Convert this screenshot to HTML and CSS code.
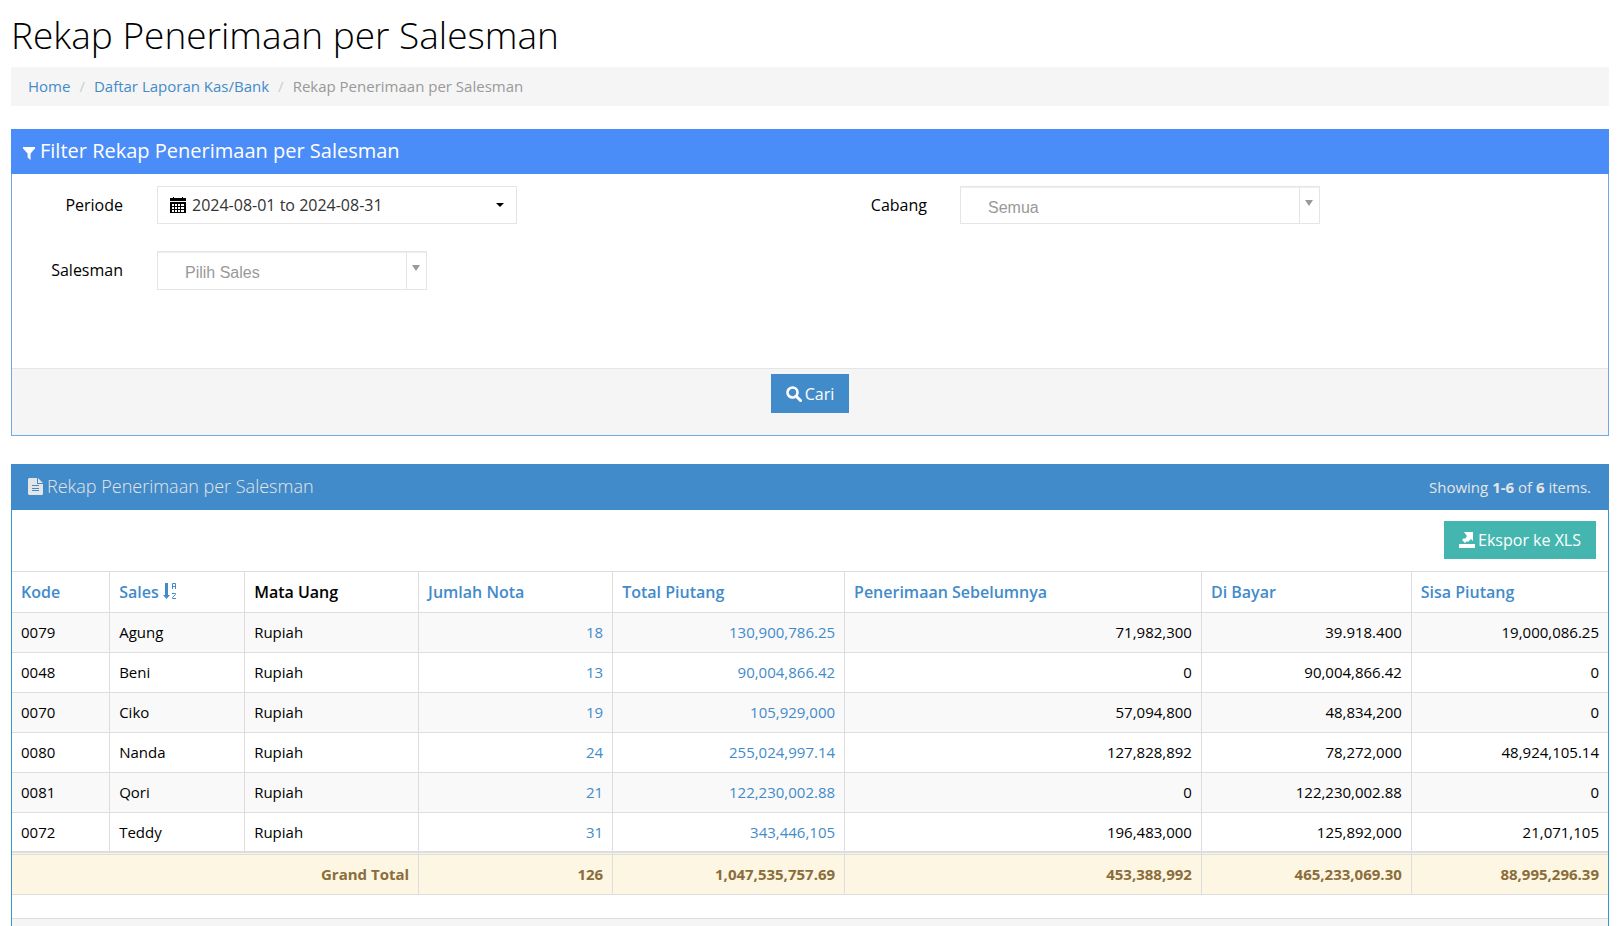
FILE: index.html
```html
<!DOCTYPE html>
<html lang="id">
<head>
<meta charset="utf-8">
<title>Rekap Penerimaan per Salesman</title>
<link rel="stylesheet" href="styles.css">
</head>
<body>
<main class="page">
  <h1 class="page-title">Rekap Penerimaan per Salesman</h1>
  <nav class="breadcrumb" aria-label="Breadcrumb">
    <a href="#">Home</a><span class="sep">/</span><a href="#">Daftar Laporan Kas/Bank</a><span class="sep">/</span><span>Rekap Penerimaan per Salesman</span>
  </nav>

  <form class="panel panel-filter">
    <h2 class="filter-heading"><svg class="icon icon-funnel" viewBox="0 0 12 13"><path d="M0 0h12v1.400L7.600 6.500V13L4.600 10.500v-4L0 1.400z"/></svg>Filter Rekap Penerimaan per Salesman</h2>
    <div class="fields">
      <div class="field">
        <label for="periode">Periode</label>
        <button type="button" class="date-range" id="periode"><svg class="icon icon-calendar" viewBox="0 0 16 16"><path fill-rule="evenodd" d="M0 1h3V0h1v1h8V0h1v1h3v3H0zM0 5h16v11H0zM2 7v2h2V7zm3 0v2h2V7zm3 0v2h2V7zm3 0v2h3V7zM2 10v2h2v-2zm3 0v2h2v-2zm3 0v2h2v-2zm3 0v2h3v-2zM2 13v2h2v-2zm3 0v2h2v-2zm3 0v2h2v-2zm3 0v2h3v-2z"/></svg><span>2024-08-01 to 2024-08-31</span><span class="caret"></span></button>
      </div>
      <div class="field">
        <label for="cabang">Cabang</label>
        <div class="select-box"><select id="cabang"><option>Semua</option></select></div>
      </div>
      <div class="field">
        <label for="salesman">Salesman</label>
        <div class="select-box select-short"><select id="salesman"><option>Pilih Sales</option></select></div>
      </div>
    </div>
    <div class="filter-footer">
      <button type="submit" class="btn btn-primary"><svg class="icon icon-search" viewBox="0 0 16 16"><circle cx="6.500" cy="6.500" r="5" fill="none" stroke="currentColor" stroke-width="2.600"/><path d="M10 10l4.500 4.500" stroke="currentColor" stroke-width="3" stroke-linecap="round"/></svg>Cari</button>
    </div>
  </form>

  <section class="panel panel-result">
    <header class="result-heading">
      <h2><svg class="icon icon-file" viewBox="0 0 15 17"><path fill-rule="evenodd" d="M1 0h8v6h6v10l-1 1H1l-1-1V1zM10 0l5 5h-5zM4 7v1h7V7zm0 3v1h7v-1zm0 2v1h7v-1z"/></svg>Rekap Penerimaan per Salesman</h2>
      <div class="summary">Showing <b>1-6</b> of <b>6</b> items.</div>
    </header>
    <div class="toolbar">
      <button type="button" class="btn btn-export"><svg class="icon icon-export" viewBox="0 0 16 16"><path d="M5 0h9v9l-2-2-3 3-1-1-2 2-3-3 2-2 1 1 2-3zM0 12h16v4H0z"/></svg>Ekspor ke XLS</button>
    </div>
    <table class="grid">
      <colgroup><col class="c1"><col class="c2"><col class="c3"><col class="c4"><col class="c5"><col class="c6"><col class="c7"><col class="c8"></colgroup>
      <thead>
        <tr><th><a href="#">Kode</a></th><th><a href="#">Sales <svg class="icon icon-sort" viewBox="0 0 14 17"><path d="M2 0h3v12h2l-3.500 4L0 12h2z"/><path fill="none" stroke="currentColor" d="M9.500 6V.500h3V6M9.500 3.500h3M9 10.500h3.500v1l-3 3v1H13"/></svg></a></th><th>Mata Uang</th><th><a href="#">Jumlah Nota</a></th><th><a href="#">Total Piutang</a></th><th><a href="#">Penerimaan Sebelumnya</a></th><th><a href="#">Di Bayar</a></th><th><a href="#">Sisa Piutang</a></th></tr>
      </thead>
      <tbody>
        <tr><td>0079</td><td>Agung</td><td>Rupiah</td><td class="num"><a href="#">18</a></td><td class="num"><a href="#">130,900,786.25</a></td><td class="num">71,982,300</td><td class="num">39.918.400</td><td class="num">19,000,086.25</td></tr>
        <tr><td>0048</td><td>Beni</td><td>Rupiah</td><td class="num"><a href="#">13</a></td><td class="num"><a href="#">90,004,866.42</a></td><td class="num">0</td><td class="num">90,004,866.42</td><td class="num">0</td></tr>
        <tr><td>0070</td><td>Ciko</td><td>Rupiah</td><td class="num"><a href="#">19</a></td><td class="num"><a href="#">105,929,000</a></td><td class="num">57,094,800</td><td class="num">48,834,200</td><td class="num">0</td></tr>
        <tr><td>0080</td><td>Nanda</td><td>Rupiah</td><td class="num"><a href="#">24</a></td><td class="num"><a href="#">255,024,997.14</a></td><td class="num">127,828,892</td><td class="num">78,272,000</td><td class="num">48,924,105.14</td></tr>
        <tr><td>0081</td><td>Qori</td><td>Rupiah</td><td class="num"><a href="#">21</a></td><td class="num"><a href="#">122,230,002.88</a></td><td class="num">0</td><td class="num">122,230,002.88</td><td class="num">0</td></tr>
        <tr><td>0072</td><td>Teddy</td><td>Rupiah</td><td class="num"><a href="#">31</a></td><td class="num"><a href="#">343,446,105</a></td><td class="num">196,483,000</td><td class="num">125,892,000</td><td class="num">21,071,105</td></tr>
      </tbody>
      <tfoot>
        <tr><td class="num" colspan="3">Grand Total</td><td class="num">126</td><td class="num">1,047,535,757.69</td><td class="num">453,388,992</td><td class="num">465,233,069.30</td><td class="num">88,995,296.39</td></tr>
      </tfoot>
    </table>
    <div class="result-footer"></div>
  </section>
</main>
</body>
</html>
```

FILE: styles.css
```css
* {
  box-sizing: border-box;
}

body {
  margin: 0;
  background: #fff;
  color: #000;
  font: 400 15px/22px "Open Sans", sans-serif;
}

a {
  color: #428bca;
  text-decoration: none;
}

button,
select {
  font: inherit;
}

.icon {
  fill: currentColor;
  flex: none;
}

.page {
  padding: 7px 12px 0 11px;
}

.page-title {
  margin: 0;
  font-size: 37px;
  font-weight: 300;
  line-height: 55px;
}

.breadcrumb {
  display: flex;
  margin: 5px 0 23px;
  padding: 8px 17px;
  height: 39px;
  background: #f5f5f5;
  color: #999;
}

.sep {
  padding: 0 9px;
  color: #ccc;
}

.panel {
  border: 1px solid #6faae6;
}

.filter-heading {
  display: flex;
  align-items: center;
  gap: 5px;
  margin: -1px -1px 0;
  padding: 0 12px 2px;
  height: 45px;
  background: #4b8df8;
  color: #fff;
  font-size: 20px;
  font-weight: 400;
}

.icon-funnel {
  width: 12px;
  height: 13px;
  margin-top: 6px;
}

.fields {
  display: grid;
  grid-template-columns: 1fr 1fr;
  row-gap: 27px;
  padding: 12px 0 78px;
}

.field {
  display: flex;
  font-size: 16px;
}

.field label {
  width: 111px;
  padding-top: 8px;
  text-align: right;
}

.field:nth-child(even) label {
  width: 117px;
}

.field .date-range,
.select-box {
  width: 360px;
  height: 38px;
  margin-left: 34px;
  border: 1px solid #e5e5e5;
  background: #fff;
}

.field:nth-child(even) .select-box {
  margin-left: 33px;
}

.date-range {
  display: flex;
  align-items: center;
  gap: 6px;
  padding: 0 12px;
  color: #333;
}

.icon-calendar {
  width: 16px;
  height: 16px;
  color: #000;
}

.caret {
  margin-left: auto;
  border: 4px solid transparent;
  border-top-color: #000;
  border-bottom: 0;
}

.select-box {
  position: relative;
  box-shadow: inset 0 1px 1px #eee;
}

.field .select-short {
  width: 270px;
  height: 39px;
}

.select-box select {
  width: 100%;
  height: 100%;
  padding: 5px 27px 0;
  border: 0;
  background: transparent;
  color: #999;
  font-family: "Liberation Sans", Arial, sans-serif;
  appearance: none;
}

.select-box::before {
  position: absolute;
  top: 0;
  right: 19px;
  bottom: 0;
  border-left: 1px solid #e5e5e5;
  content: "";
}

.select-box::after {
  position: absolute;
  top: 13px;
  right: 6px;
  border: 4px solid transparent;
  border-top: 6px solid #999;
  border-bottom: 0;
  content: "";
}

.filter-footer {
  display: flex;
  justify-content: center;
  height: 67px;
  padding-top: 5px;
  border-top: 1px solid #e5e5e5;
  background: #f5f5f5;
}

.btn {
  display: flex;
  align-items: center;
  gap: 3px;
  height: 38px;
  padding: 0 15px;
  border: 0;
  color: #fff;
  font-size: 16px;
}

.btn-primary {
  height: 39px;
  background: #428bca;
}

.icon-search,
.icon-export {
  width: 16px;
  height: 16px;
}

.panel-result {
  margin-top: 28px;
  border-color: #3598c8;
}

.result-heading {
  display: flex;
  align-items: center;
  justify-content: space-between;
  height: 46px;
  margin: -1px -1px 0;
  padding: 0 18px 0 17px;
  background: #428bca;
  color: #e5e5e5;
}

.result-heading h2 {
  display: flex;
  align-items: center;
  gap: 4px;
  margin: 0;
  padding-bottom: 2px;
  font-size: 18px;
  font-weight: 300;
}

.icon-file {
  width: 15px;
  height: 17px;
}

.toolbar {
  display: flex;
  justify-content: flex-end;
  padding: 11px 12px 12px;
}

.btn-export {
  background: #45b6af;
}

.grid {
  width: 100%;
  border-collapse: separate;
  border-spacing: 0;
  border-top: 1px solid #ddd;
  table-layout: fixed;
}

.c1 { width: 6.150%; }
.c2 { width: 8.460%; }
.c3 { width: 10.900%; }
.c4 { width: 12.160%; }
.c5 { width: 14.530%; }
.c6 { width: 22.360%; }
.c7 { width: 13.150%; }
.c8 { width: 12.290%; }

.grid th,
.grid td {
  height: 40px;
  padding: 8px 9px;
  border-right: 1px solid #ddd;
  border-bottom: 1px solid #ddd;
  text-align: left;
}

.grid td {
  padding: 8px 9px 9px;
}

.grid th {
  height: 41px;
  font-size: 16px;
  font-weight: 600;
}

.grid th:last-child,
.grid td:last-child {
  border-right: 0;
}

.grid tbody tr:nth-child(odd) {
  background: #f9f9f9;
}

.grid .num {
  text-align: right;
}

.icon-sort {
  width: 14px;
  height: 17px;
  vertical-align: -2px;
}

.grid tbody tr:last-child td {
  height: 39px;
  padding-bottom: 8px;
}

.grid tfoot td {
  height: 43px;
  border-top: 3px double #ddd;
  background: #fdf6e3;
  color: #8a6d3b;
  font-weight: 700;
}

.result-footer {
  height: 48px;
  margin-top: 23px;
  border-top: 1px solid #ddd;
  background: #f5f5f5;
}
```
